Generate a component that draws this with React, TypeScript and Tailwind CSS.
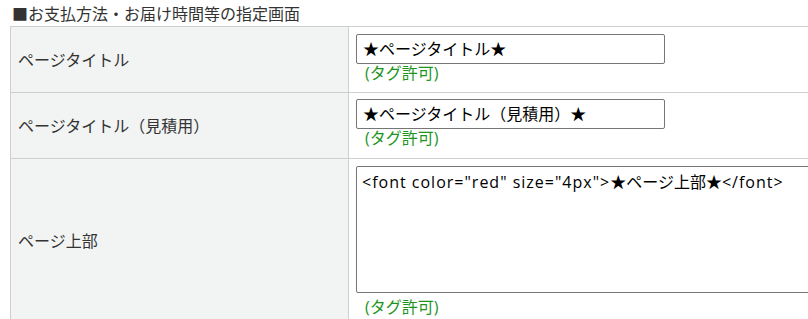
import React from "react";

const font = { fontFamily: '"Open Sans", "Noto Sans CJK JP", "Noto Sans", sans-serif' };

function Green({ extra = "" }: { extra?: string }) {
  return (
    <div className={`pl-[9px] text-[16px] leading-[18px] text-[#1d951d] ${extra}`}>(タグ許可)</div>
  );
}

export default function App() {
  return (
    <div className="w-[808px] h-[319px] overflow-hidden bg-white text-[#333]" style={font}>
      <div className="pl-[12px] pt-[3px] h-[26px] text-[16px] leading-[22px] text-[#333]">■お支払方法・お届け時間等の指定画面</div>
      <table className="ml-[10px] w-[1000px] border-collapse text-[16px]">
        <tbody>
          <tr>
            <td className="w-[338px] h-[66px] border border-[#cfcfcf] bg-[#f2f4f3] pl-[7px] align-middle leading-[20px]">ページタイトル</td>
            <td className="border border-[#cfcfcf] pl-[7px] pt-[7px] pb-[10px] align-top">
              <div className="w-[309px] h-[30px] border border-[#767676] rounded-[2px] px-[6px] text-[16px] leading-[28px] text-black">★ページタイトル★</div>
              <Green />
            </td>
          </tr>
          <tr>
            <td className="h-[66px] border border-[#cfcfcf] bg-[#f2f4f3] pl-[7px] align-middle leading-[20px]">ページタイトル（見積用）</td>
            <td className="border border-[#cfcfcf] pl-[7px] pt-[6px] pb-[10px] align-top">
              <div className="w-[309px] h-[30px] border border-[#767676] rounded-[2px] px-[6px] text-[16px] leading-[28px] text-black">★ページタイトル（見積用）★</div>
              <Green />
            </td>
          </tr>
          <tr>
            <td className="h-[180px] border border-[#cfcfcf] bg-[#f2f4f3] pl-[7px] align-middle leading-[20px] pb-[16px]">ページ上部</td>
            <td className="border border-[#cfcfcf] pl-[7px] pt-[7px] pb-[10px] align-top">
              <div className="w-[560px] h-[127px] border border-[#767676] rounded-[2px] pl-[5px] pt-[5px] text-[16px] leading-[20px] text-black">
                <span className="tracking-[1px]">&lt;font color="red" size="4px"&gt;</span>★ページ上部★<span className="tracking-[1px]">&lt;/font&gt;</span>
              </div>
              <Green extra="mt-[5px]" />
            </td>
          </tr>
        </tbody>
      </table>
    </div>
  );
}
